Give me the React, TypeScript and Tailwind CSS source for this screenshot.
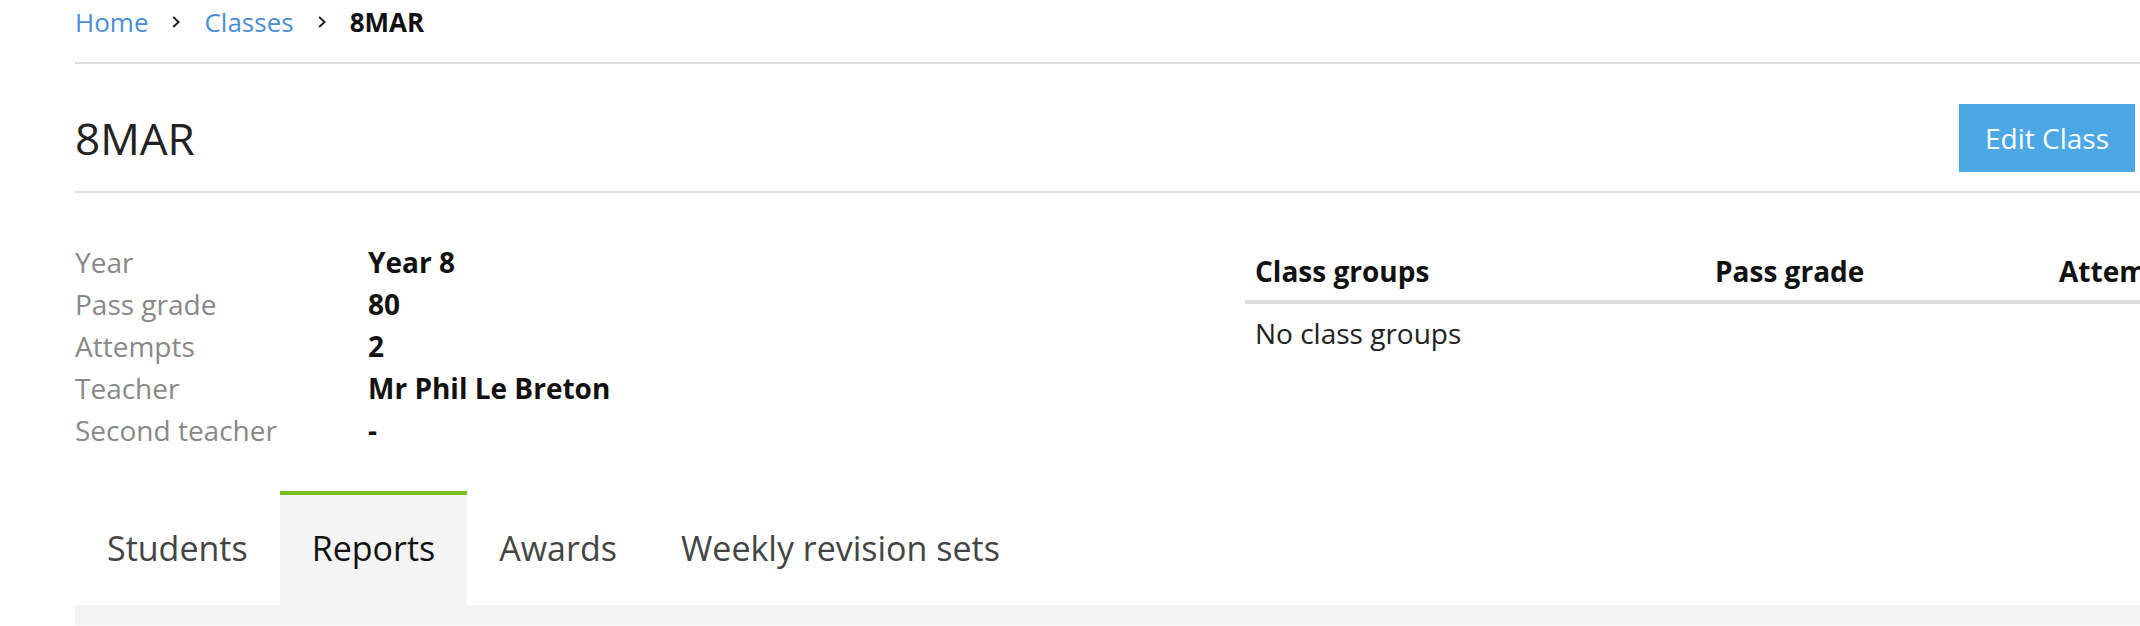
import React from "react";

const Chevron = () => (
  <svg width="8" height="12" viewBox="0 0 8 12" className="shrink-0">
    <polyline points="1.2,1 6.6,6 1.2,11" fill="none" stroke="#1a1a1a" strokeWidth="1.8" />
  </svg>
);

const details: [string, string][] = [
  ["Year", "Year 8"],
  ["Pass grade", "80"],
  ["Attempts", "2"],
  ["Teacher", "Mr Phil Le Breton"],
  ["Second teacher", "-"],
];

const tabs = ["Students", "Reports", "Awards", "Weekly revision sets"];

export default function App() {
  return (
    <div className="w-full h-[626px] overflow-hidden bg-white font-['Open_Sans',sans-serif]">
      <div className="pl-[75px]">
        {/* Breadcrumb */}
        <nav className="flex items-center gap-6 pt-[1px] text-[26px] leading-[42px] mb-[19px]">
          <span className="text-[#4a8fd3]">Home</span>
          <Chevron />
          <span className="text-[#4a8fd3]">Classes</span>
          <Chevron />
          <span className="font-bold text-[#111]">8MAR</span>
        </nav>
        <div className="h-[2px] bg-[#dddddd]" />

        {/* Header */}
        <div className="flex items-center justify-between pt-[40px] pb-[19px] pr-[5px]">
          <h1 className="text-[44px] leading-[60px] text-[#222] font-normal">8MAR</h1>
          <button className="h-[68px] w-[176px] bg-[#4ca7e5] text-white text-[28px] leading-none flex items-center justify-center">
            Edit Class
          </button>
        </div>
        <div className="h-[2px] bg-[#dddddd]" />

        {/* Details + table */}
        <div className="flex pt-[48px]">
          <div className="w-[1170px] shrink-0">
            <div className="grid grid-cols-[293px_1fr] text-[28px] leading-[42px]">
              {details.map(([k, v]) => (
                <React.Fragment key={k}>
                  <div className="text-[#888888]">{k}</div>
                  <div className="font-bold text-[#111]">{v}</div>
                </React.Fragment>
              ))}
            </div>
          </div>
          <div className="shrink-0">
            <table className="table-fixed w-[1160px] border-collapse text-[28px] leading-[37px]">
              <colgroup>
                <col className="w-[460px]" />
                <col className="w-[344px]" />
                <col />
              </colgroup>
              <thead>
                <tr className="border-b-4 border-[#dddddd]">
                  <th className="text-left font-bold text-[#111] px-[10px] pt-[12px] pb-[10px]">Class groups</th>
                  <th className="text-left font-bold text-[#111] px-[10px] pt-[12px] pb-[10px]">Pass grade</th>
                  <th className="text-left font-bold text-[#111] px-[10px] pt-[12px] pb-[10px]">Attempts</th>
                </tr>
              </thead>
              <tbody>
                <tr>
                  <td colSpan={3} className="px-[10px] pt-[11px] pb-[12px] text-[#222]">
                    No class groups
                  </td>
                </tr>
              </tbody>
            </table>
          </div>
        </div>

        {/* Tabs */}
        <div className="flex mt-[40px]">
          {tabs.map((t) => {
            const active = t === "Reports";
            return (
              <div
                key={t}
                className={
                  active
                    ? "border-t-4 border-[#78be20] bg-[#f4f4f4] px-[32px] pt-[29px] pb-[33px] text-[34px] leading-[48px] text-[#111]"
                    : "border-t-4 border-transparent px-[32px] pt-[29px] pb-[33px] text-[34px] leading-[48px] text-[#444]"
                }
              >
                {t}
              </div>
            );
          })}
        </div>
        <div className="h-[20px] bg-[#f4f4f4]" />
      </div>
    </div>
  );
}
